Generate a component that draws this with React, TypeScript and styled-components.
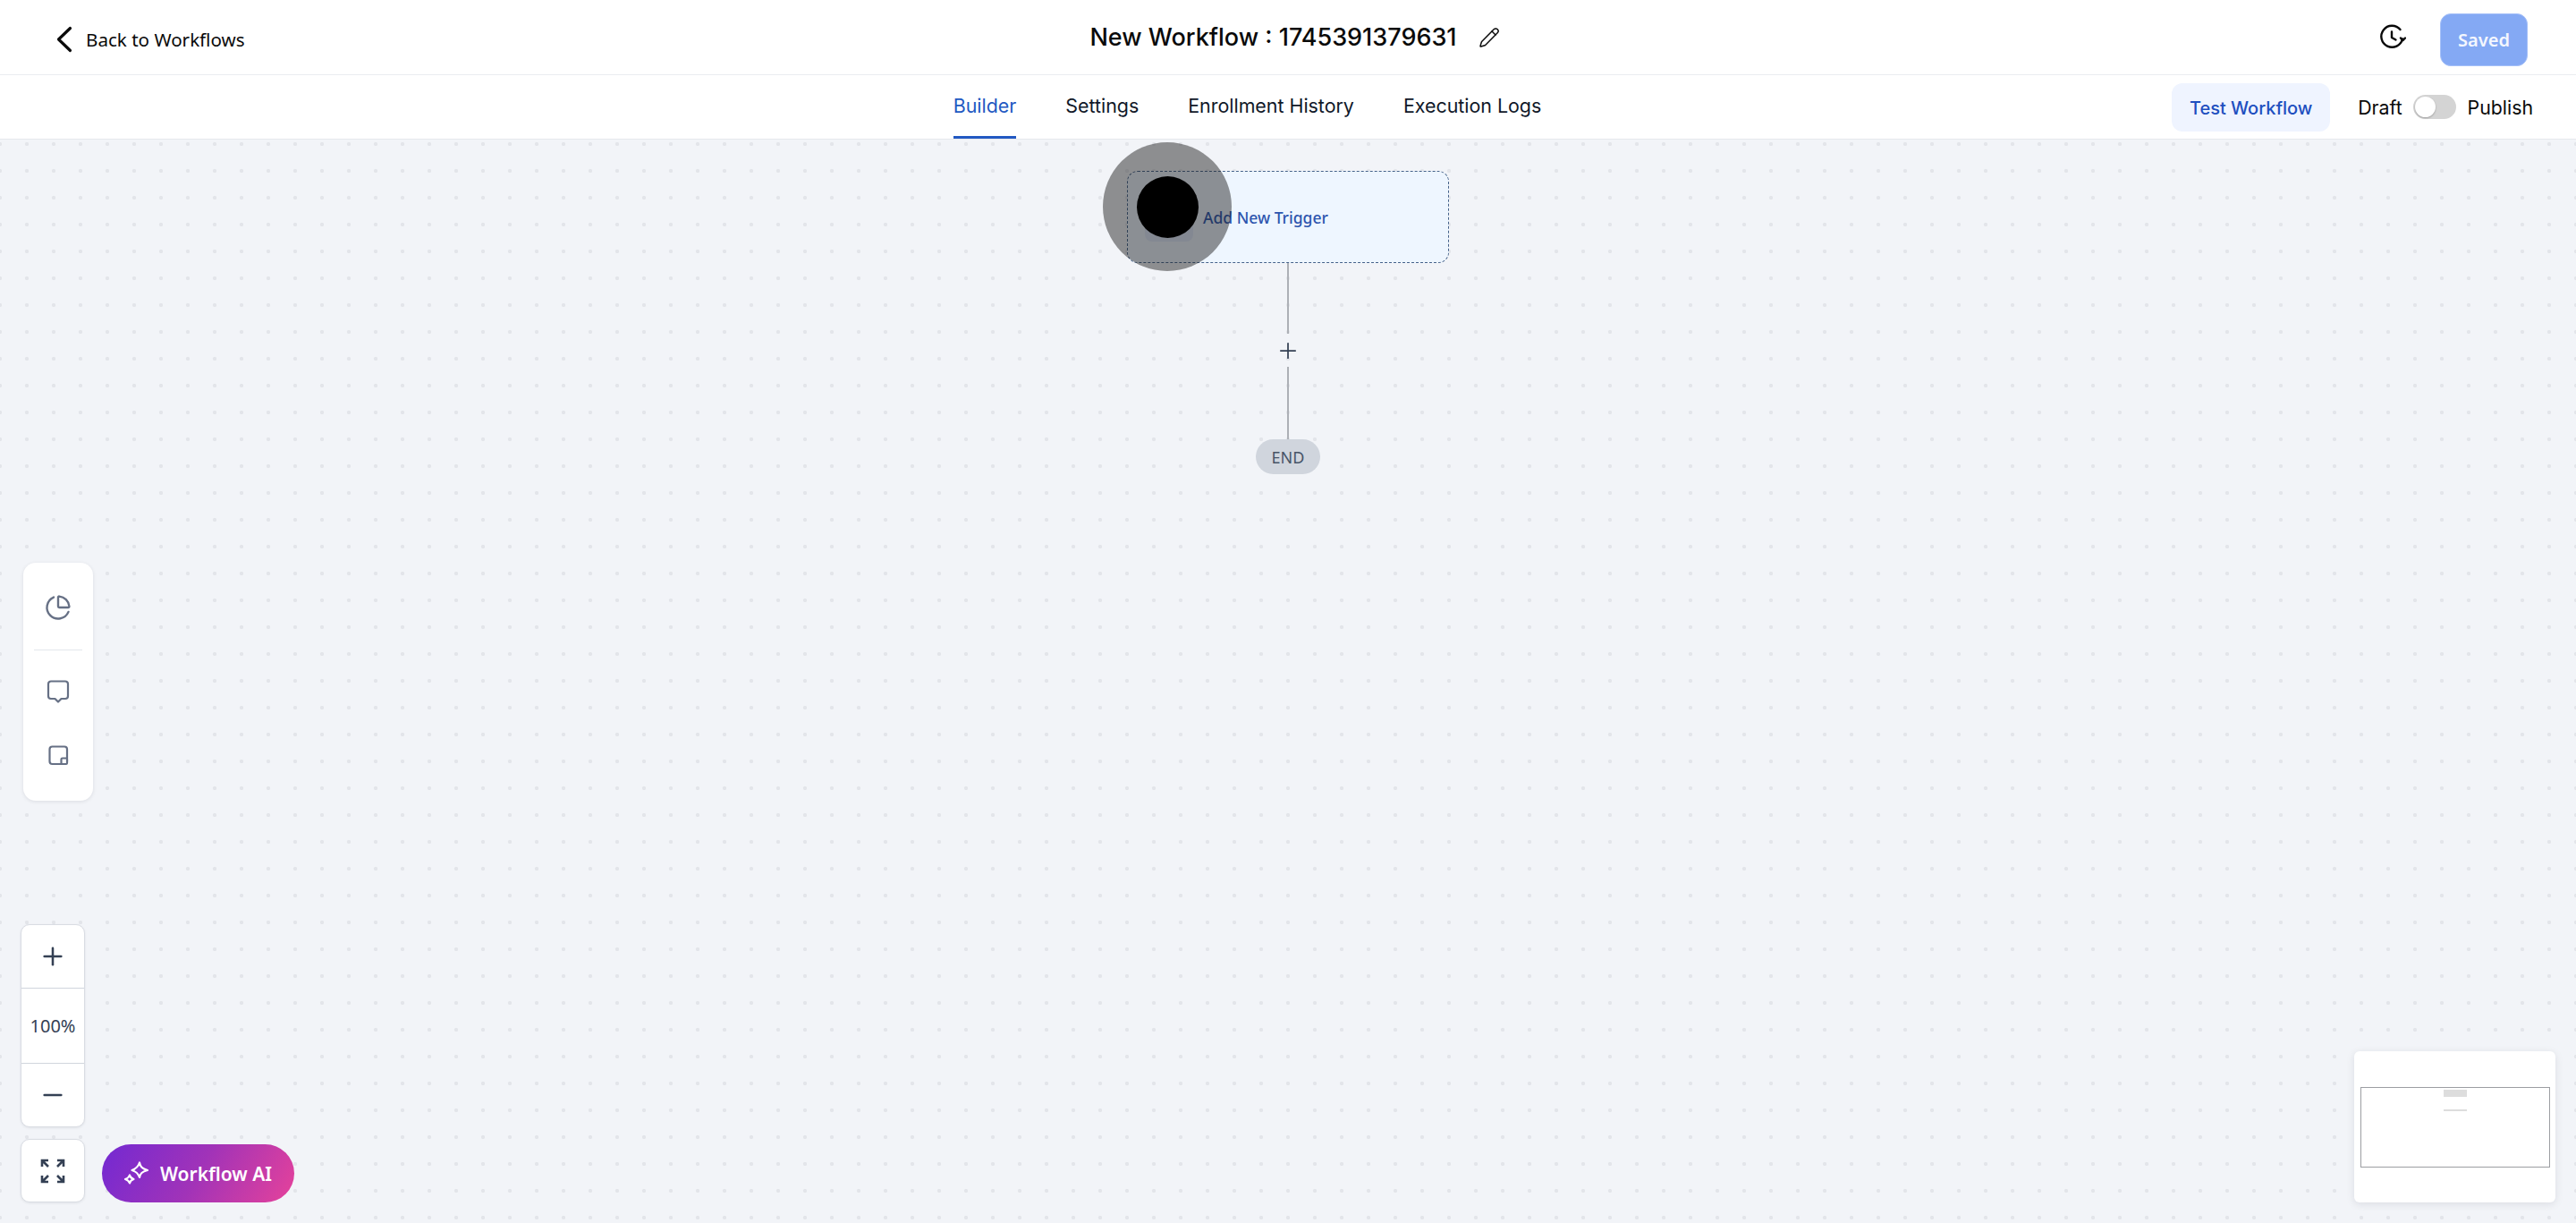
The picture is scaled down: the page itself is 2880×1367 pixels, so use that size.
import React from 'react';
import styled, { createGlobalStyle } from 'styled-components';
import { Pencil, Plus, Minus, ChartPie } from 'lucide-react';

const Global = createGlobalStyle`
  html, body { margin: 0; padding: 0; height: 100%; overflow: hidden; }
  #root { height: 100%; }
  * { box-sizing: border-box; }
`;

const Page = styled.div`
  width: 2880px;
  height: 1367px;
  display: flex;
  flex-direction: column;
  background: #fff;
  font-family: Inter, "Liberation Sans", sans-serif;
  color: #0a0a0a;
`;

const TopBar = styled.header`
  height: 84px;
  flex: none;
  display: grid;
  grid-template-columns: 1fr auto 1fr;
  align-items: center;
  padding: 0 54px 0 63px;
  border-bottom: 1px solid #eaecf0;
`;

const BackLink = styled.a`
  display: flex;
  align-items: center;
  gap: 15px;
  margin-top: 5px;
  font-family: "Noto Sans", sans-serif;
  font-size: 20.6px;
  font-weight: 400;
  color: #0a0a0a;
`;

const TitleGroup = styled.div`
  display: flex;
  align-items: center;
  gap: 24px;
  padding-left: 6px;
`;

const Title = styled.h1`
  margin: 0;
  font-size: 27px;
  font-weight: 500;
  line-height: 36px;
`;

const TopActions = styled.div`
  display: flex;
  justify-content: flex-end;
  align-items: center;
  gap: 38px;
`;

const SavedButton = styled.button`
  width: 98px;
  height: 59px;
  margin-top: 6px;
  border: 1px solid #a4bff8;
  border-radius: 12px;
  background: #84a9f4;
  color: #f4f7fe;
  font-family: "Noto Sans", sans-serif;
  font-size: 20px;
  font-weight: 600;
  padding: 0;
`;

const TabBar = styled.nav`
  height: 71px;
  flex: none;
  display: grid;
  grid-template-columns: 1fr auto 1fr;
`;

const Tabs = styled.div`
  display: flex;
  gap: 55px;
  margin-right: 91px;
  grid-column: 2;
`;

const Tab = styled.a<{ $active?: boolean }>`
  display: flex;
  align-items: center;
  height: 71px;
  font-size: 21.4px;
  font-weight: 400;
  color: ${p => (p.$active ? '#2259c2' : '#101828')};
  border-bottom: 3px solid ${p => (p.$active ? '#2259c2' : 'transparent')};
`;

const PublishRow = styled.div`
  display: flex;
  justify-content: flex-end;
  align-items: center;
  grid-column: 3;
  padding-right: 48px;
  font-size: 21.3px;
  font-weight: 400;
`;

const TestButton = styled.button`
  width: 177px;
  height: 54px;
  margin-right: 31px;
  border: none;
  border-radius: 12px;
  background: #eff4ff;
  color: #1e4fbf;
  font-family: Inter, sans-serif;
  font-size: 20px;
  font-weight: 500;
  padding: 2px 0 0;
`;

const Switch = styled.span`
  width: 48px;
  height: 27px;
  margin: 0 13px 0 12px;
  border-radius: 14px;
  background: #d4d4d4;
  display: flex;
  align-items: center;
  padding-left: 2px;
  &::before {
    content: '';
    width: 23px;
    height: 23px;
    border-radius: 50%;
    background: #fff;
    box-shadow: 0 1px 2px rgba(0, 0, 0, 0.25);
  }
`;

const Canvas = styled.main`
  position: relative;
  flex: 1;
  border-top: 1px solid #e6e8ec;
  background-color: #f2f4f8;
  background-image: radial-gradient(circle, #e3e5ea 1.7px, transparent 2.6px);
  background-size: 30px 30px;
  background-position: -15px -10px;
  overflow: hidden;
`;

const Flow = styled.div`
  position: absolute;
  left: 1260px;
  top: 35px;
  width: 360px;
  display: flex;
  flex-direction: column;
  align-items: center;
`;

const TriggerCard = styled.div`
  width: 360px;
  height: 103px;
  display: flex;
  align-items: center;
  gap: 11px;
  padding-left: 19px;
  border: 1px dashed #45628a;
  border-radius: 12px;
  background: #eef6ff;
`;

const TriggerIcon = styled.span`
  width: 54px;
  height: 54px;
  border-radius: 8px;
  background: #dfe8fb;
`;

const TriggerLabel = styled.span`
  font-family: "Noto Sans", sans-serif;
  font-size: 17.5px;
  font-weight: 500;
  color: #2d55ae;
`;

const Connector = styled.span<{ $height: number }>`
  width: 2px;
  height: ${p => p.$height}px;
  background: #adb0b6;
`;

const AddStep = styled.span`
  height: 37px;
  display: flex;
  align-items: center;
  color: #344054;
`;

const EndPill = styled.span`
  width: 72px;
  height: 39px;
  border-radius: 20px;
  background: #d0d5dd;
  color: #475467;
  font-family: "Noto Sans", sans-serif;
  font-size: 18px;
  display: flex;
  align-items: center;
  justify-content: center;
`;

const CursorHalo = styled.div`
  position: absolute;
  left: 1233px;
  top: 3px;
  width: 144px;
  height: 144px;
  border-radius: 50%;
  background: rgba(28, 28, 28, 0.47);
  display: flex;
  align-items: center;
  justify-content: center;
  &::after {
    content: '';
    width: 69px;
    height: 69px;
    border-radius: 50%;
    background: #000;
  }
`;

const ToolPanel = styled.aside`
  position: absolute;
  left: 26px;
  top: 473px;
  width: 78px;
  height: 266px;
  padding-top: 35px;
  border-radius: 14px;
  background: #fff;
  box-shadow: 0 1px 4px rgba(16, 24, 40, 0.1);
  display: flex;
  flex-direction: column;
  align-items: center;
  color: #667085;
`;

const ToolDivider = styled.span`
  width: 54px;
  height: 1px;
  margin: 32px 0 31px;
  background: #e4e7ec;
`;

const ToolGap = styled.span`
  height: 46px;
`;

const ZoomDock = styled.div`
  position: absolute;
  left: 23px;
  bottom: 23px;
  display: flex;
  align-items: flex-end;
  gap: 19px;
`;

const ZoomColumn = styled.div`
  display: flex;
  flex-direction: column;
  gap: 13px;
`;

const ZoomCard = styled.div`
  width: 72px;
  border: 1px solid #d9dce3;
  border-radius: 10px;
  background: #fff;
  box-shadow: 0 1px 3px rgba(16, 24, 40, 0.08);
  display: flex;
  flex-direction: column;
  color: #344054;
`;

const ZoomCell = styled.div<{ $height: number; $divided?: boolean }>`
  height: ${p => p.$height}px;
  display: flex;
  align-items: center;
  justify-content: center;
  border-top: ${p => (p.$divided ? '1px solid #d0d5dd' : 'none')};
  font-family: "Noto Sans", sans-serif;
  font-size: 20px;
`;

const AiButton = styled.button`
  width: 215px;
  height: 65px;
  border: none;
  border-radius: 33px;
  background: linear-gradient(120deg, #7329d2 0%, #a133b8 50%, #e6429a 100%);
  color: #fff;
  font-family: "Noto Sans", sans-serif;
  font-size: 21px;
  font-weight: 600;
  display: flex;
  align-items: center;
  gap: 11px;
  padding: 0 0 0 24px;
`;

const MiniMap = styled.div`
  position: absolute;
  right: 23px;
  bottom: 23px;
  width: 225px;
  height: 169px;
  padding-top: 40px;
  border-radius: 6px;
  background: #fff;
  box-shadow: 0 2px 10px rgba(16, 24, 40, 0.1);
  display: flex;
  justify-content: center;
`;

const MiniViewport = styled.div`
  width: 212px;
  height: 90px;
  border: 1px solid #9c9ea2;
  display: flex;
  flex-direction: column;
  align-items: center;
  padding-top: 2px;
`;

const MiniNode = styled.span<{ $height: number; $gap: number }>`
  width: 26px;
  height: ${p => p.$height}px;
  margin-bottom: ${p => p.$gap}px;
  background: #dddddd;
`;

const BackChevron = () => (
  <svg width="18" height="30" viewBox="0 0 18 30" fill="none" stroke="#0a0a0a" strokeWidth="3.2" strokeLinecap="round" strokeLinejoin="round">
    <path d="M15.500 2.500 2.500 15l13 12.500" />
  </svg>
);

const HistoryIcon = () => (
  <svg width="30" height="30" viewBox="0 0 30 30" fill="none" stroke="#0a0a0a" strokeWidth="2.4" strokeLinecap="round" strokeLinejoin="round">
    <path d="M26 16.500A12 12 0 1 1 23.500 6" />
    <path d="M14 8.500V15l4.500 2.500" />
    <path d="M24 15.500l2.400 2.600 2.600-2.600" />
  </svg>
);

const CommentIcon = () => (
  <svg width="28" height="28" viewBox="0 0 28 28" fill="none" stroke="currentColor" strokeWidth="2.200" strokeLinejoin="round">
    <path d="M6 3.500h16a3 3 0 0 1 3 3V20a3 3 0 0 1-3 3h-4.500L14 26.500 10.500 23H6a3 3 0 0 1-3-3V6.500a3 3 0 0 1 3-3z" />
  </svg>
);

const NoteIcon = () => (
  <svg width="24" height="24" viewBox="0 0 24 24" fill="none" stroke="currentColor" strokeWidth="2.200" strokeLinejoin="round">
    <rect x="2.500" y="2.500" width="19.500" height="19.500" rx="3" />
    <rect x="15.500" y="15.500" width="6.500" height="6.500" rx="1.200" fill="#fff" />
  </svg>
);

const FitIcon = () => (
  <svg width="28" height="28" viewBox="0 0 28 28" fill="none" stroke="#344054" strokeWidth="2.600">
    <path d="M2 9V2h7M2 2l7 7" />
    <path d="M26 9V2h-7M26 2l-7 7" />
    <path d="M2 19v7h7M2 26l7-7" />
    <path d="M26 19v7h-7M26 26l-7-7" />
  </svg>
);

const SparkIcon = () => (
  <svg width="30" height="30" viewBox="0 0 30 30" fill="none" stroke="#fff" strokeWidth="2.200" strokeLinejoin="round">
    <path d="M18 2.500c.8 4.600 2.700 6.800 9 8.500-6.300 1.700-8.200 3.500-9 8-1.600-4.500-3.400-6.300-8.500-8 5.100-1.700 7-3.900 8.500-8.500z" />
    <path d="M7 16.500c.4 2.300 1.400 3.500 4.500 4.500-3.100 1-4.100 2.200-4.500 4.500C6.200 23.200 5.200 22 2 21c3.200-1 4.200-2.200 5-4.500z" />
  </svg>
);

export default function App() {
  return (
    <Page>
      <Global />
      <TopBar>
        <BackLink>
          <BackChevron />
          Back to Workflows
        </BackLink>
        <TitleGroup>
          <Title>New Workflow : 1745391379631</Title>
          <Pencil size={24} strokeWidth={1.5} />
        </TitleGroup>
        <TopActions>
          <HistoryIcon />
          <SavedButton>Saved</SavedButton>
        </TopActions>
      </TopBar>
      <TabBar>
        <Tabs>
          <Tab $active>Builder</Tab>
          <Tab>Settings</Tab>
          <Tab>Enrollment History</Tab>
          <Tab>Execution Logs</Tab>
        </Tabs>
        <PublishRow>
          <TestButton>Test Workflow</TestButton>
          Draft
          <Switch />
          Publish
        </PublishRow>
      </TabBar>
      <Canvas>
        <Flow>
          <TriggerCard>
            <TriggerIcon />
            <TriggerLabel>Add New Trigger</TriggerLabel>
          </TriggerCard>
          <Connector $height={79} />
          <AddStep><Plus size={28} strokeWidth={1.5} /></AddStep>
          <Connector $height={81} />
          <EndPill>END</EndPill>
        </Flow>
        <CursorHalo />
        <ToolPanel>
          <ChartPie size={30} strokeWidth={1.9} />
          <ToolDivider />
          <CommentIcon />
          <ToolGap />
          <NoteIcon />
        </ToolPanel>
        <ZoomDock>
          <ZoomColumn>
            <ZoomCard>
              <ZoomCell $height={70}><Plus size={32} strokeWidth={1.9} /></ZoomCell>
              <ZoomCell $height={84} $divided>100%</ZoomCell>
              <ZoomCell $height={71} $divided><Minus size={32} strokeWidth={1.9} /></ZoomCell>
            </ZoomCard>
            <ZoomCard>
              <ZoomCell $height={69}><FitIcon /></ZoomCell>
            </ZoomCard>
          </ZoomColumn>
          <AiButton><SparkIcon />Workflow AI</AiButton>
        </ZoomDock>
        <MiniMap>
          <MiniViewport>
            <MiniNode $height={8} $gap={14} />
            <MiniNode $height={2} $gap={0} />
          </MiniViewport>
        </MiniMap>
      </Canvas>
    </Page>
  );
}
